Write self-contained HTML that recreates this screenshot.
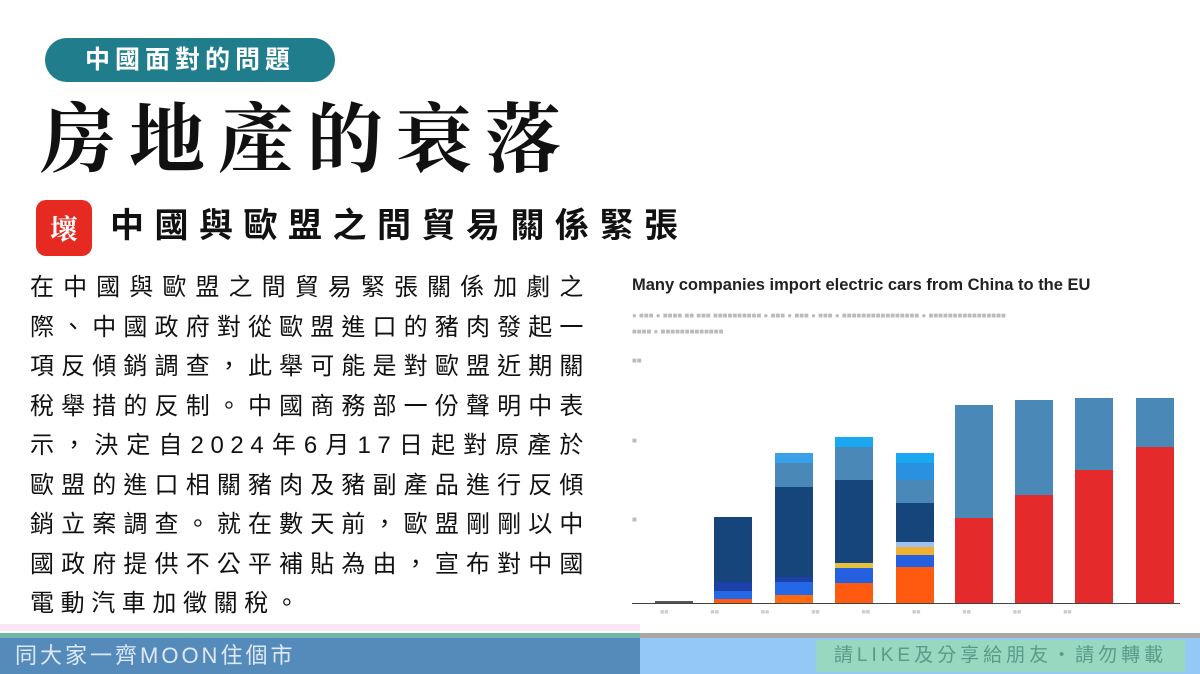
<!DOCTYPE html>
<html><head><meta charset="utf-8"><style>
*{margin:0;padding:0;box-sizing:border-box}
body{width:1200px;height:674px;background:#fff;position:relative;overflow:hidden;font-family:"Liberation Sans","Noto Sans CJK TC",sans-serif}
.a{position:absolute}
.pill{left:45px;top:38px;width:290px;height:44px;background:#1f7d8c;border-radius:22px;color:#fff;font-size:25px;font-weight:bold;letter-spacing:5px;text-align:center;line-height:44px}
.title{left:40px;top:96px;font-family:"Liberation Serif","Noto Serif CJK SC",serif;font-weight:bold;font-size:76px;letter-spacing:13px;line-height:90px;color:#111}
.red{left:36px;top:200px;width:56px;height:56px;background:#e62a22;border-radius:10px;color:#fff;font-size:28px;font-family:"Noto Serif CJK SC",serif;font-weight:bold;text-align:center;line-height:56px}
.sub{left:110px;top:204px;font-size:34px;font-weight:bold;letter-spacing:10.5px;line-height:44px;color:#111;white-space:nowrap}
.body{left:30px;top:268px;width:560px;font-size:24px;line-height:39.5px;letter-spacing:6.6px;color:#111;text-align:justify}
.bar{position:absolute;width:38px;bottom:71px;display:flex;flex-direction:column}
.bar div{width:100%}
</style></head><body>
<div class="a pill">中國面對的問題</div>
<div class="a title">房地產的衰落</div>
<div class="a red">壞</div>
<div class="a sub">中國與歐盟之間貿易關係緊張</div>
<div class="a body">在中國與歐盟之間貿易緊張關係加劇之際、中國政府對從歐盟進口的豬肉發起一項反傾銷調查，此舉可能是對歐盟近期關稅舉措的反制。中國商務部一份聲明中表示，決定自2024年6月17日起對原產於歐盟的進口相關豬肉及豬副產品進行反傾銷立案調查。就在數天前，歐盟剛剛以中國政府提供不公平補貼為由，宣布對中國電動汽車加徵關稅。</div>

<div class="a" style="left:632px;top:276px;font-size:16.5px;font-weight:bold;color:#222">Many companies import electric cars from China to the EU</div>
<div class="a" style="left:632px;top:308px;font-size:8px;color:#bbb;width:550px;line-height:16px">● ■■■ ● ■■■■ ■■ ■■■ ■■■■■■■■■■ ● ■■■ ● ■■■ ● ■■■ ● ■■■■■■■■■■■■■■■■ ● ■■■■■■■■■■■■■■■■<br>■■■■ ● ■■■■■■■■■■■■■</div>
<div class="a" style="left:632px;top:356px;font-size:8px;color:#bbb">■■</div>
<div class="a" style="left:632px;top:436px;font-size:8px;color:#bbb">■</div>
<div class="a" style="left:632px;top:515px;font-size:8px;color:#bbb">■</div>
<div class="a" style="left:632px;top:603px;width:548px;height:1px;background:#444"></div>
<div class="a" style="left:655px;top:601px;width:38px;height:2px;background:#555"></div>

<div class="bar" style="left:714px;height:86px"><div style="height:65px;background:#15457a"></div><div style="height:9px;background:#1c3fa8"></div><div style="height:8px;background:#2468e8"></div><div style="height:4px;background:#ff5a0f"></div></div>
<div class="bar" style="left:775px;height:150px"><div style="height:10px;background:#3aa0e8"></div><div style="height:24px;background:#4a88b8"></div><div style="height:90px;background:#15457a"></div><div style="height:5px;background:#1c3fa8"></div><div style="height:13px;background:#2468e8"></div><div style="height:8px;background:#ff6a10"></div></div>
<div class="bar" style="left:835px;height:166px"><div style="height:10px;background:#1aa8f0"></div><div style="height:33px;background:#4a88b8"></div><div style="height:83px;background:#15457a"></div><div style="height:5px;background:#e8c040"></div><div style="height:15px;background:#2460e0"></div><div style="height:20px;background:#ff5a0f"></div></div>
<div class="bar" style="left:896px;height:150px"><div style="height:10px;background:#1aa8f0"></div><div style="height:17px;background:#2a90e0"></div><div style="height:23px;background:#4a88b8"></div><div style="height:39px;background:#15457a"></div><div style="height:5px;background:#a0c0f0"></div><div style="height:8px;background:#f0b030"></div><div style="height:12px;background:#2460e0"></div><div style="height:36px;background:#ff5a0f"></div></div>
<div class="bar" style="left:955px;height:198px"><div style="height:113px;background:#4a88b8"></div><div style="height:85px;background:#e42a2a"></div></div>
<div class="bar" style="left:1015px;height:203px"><div style="height:95px;background:#4a88b8"></div><div style="height:108px;background:#e42a2a"></div></div>
<div class="bar" style="left:1075px;height:205px"><div style="height:72px;background:#4a88b8"></div><div style="height:133px;background:#e42a2a"></div></div>
<div class="bar" style="left:1136px;height:205px"><div style="height:49px;background:#4a88b8"></div><div style="height:156px;background:#e42a2a"></div></div>
<div class="a" style="left:660px;top:609px;font-size:7px;color:#ccc;word-spacing:40px">■■ ■■ ■■ ■■ ■■ ■■ ■■ ■■ ■■</div>

<div class="a" style="left:0;top:624px;width:640px;height:7px;background:#fbe6f8"></div>
<div class="a" style="left:0;top:633px;width:640px;height:5px;background:#6fb8a8"></div>
<div class="a" style="left:640px;top:633px;width:560px;height:5px;background:#a8a8a8"></div>
<div class="a" style="left:0;top:638px;width:640px;height:36px;background:#558bbb;color:#dfe8f8;font-size:22px;letter-spacing:3px;line-height:36px;padding-left:15px">同大家一齊MOON住個市</div>
<div class="a" style="left:640px;top:638px;width:560px;height:36px;background:#94c8f5"></div>
<div class="a" style="left:816px;top:640px;width:369px;height:32px;background:#98d8c0;color:#5a9a8a;font-size:19px;letter-spacing:4px;line-height:32px;text-align:center;white-space:nowrap;overflow:hidden">請LIKE及分享給朋友・請勿轉載</div>
</body></html>
